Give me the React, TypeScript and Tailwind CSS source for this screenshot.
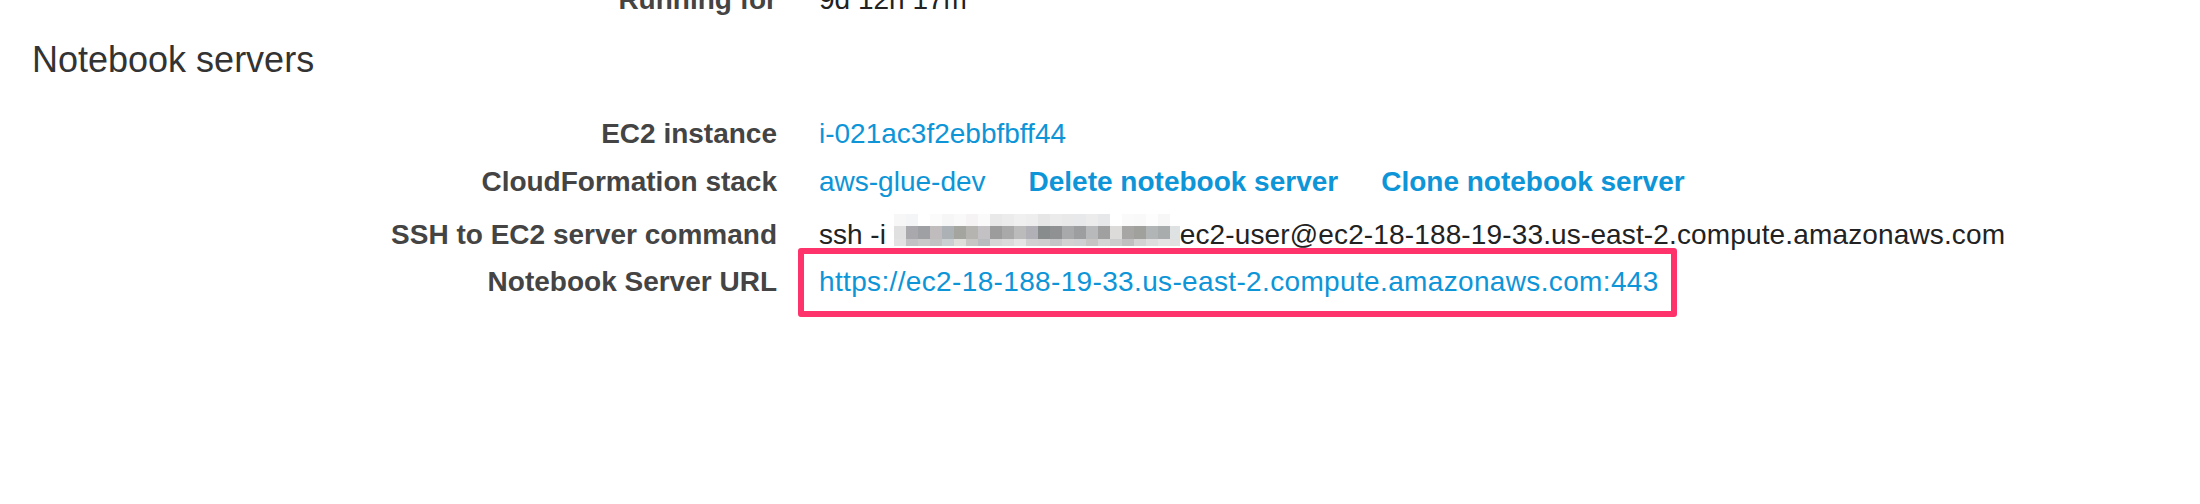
import React from "react";

const top = ['#f7f7f7','#f4f5f7','#ffffff','#fbfbfb','#f6f6f6','#f9f9f9','#f5f3f4','#fafafa','#e9e9e9','#ececec','#f0f0f0','#eeeeee','#e6e6e6','#ebebeb','#e9e9e9','#e8e9ea','#ececec','#e6e8ea','#ffffff','#fafafa','#f9f9f9','#fdfdfd','#f7f7f7','#ffffff'];
const mid = ['#e0e0e0','#a9a8ad','#9fa0a3','#c0bcbd','#acb1b5','#a4a59f','#b6b4b0','#c4c1c5','#9c9c9c','#a9a9a9','#bbbbbb','#b1b0b7','#888c8c','#8f9192','#a7a9aa','#9d9e9f','#b8b9ba','#a0a0a0','#dddbd9','#a8a6a4','#a0a09c','#b2b5b6','#a8acac','#dfe2e3'];
const bot = ['#e2e2e2','#c2c2c4','#c9c9c9','#c2c2c2','#cad0d2','#dedfda','#c8c6c4','#b8bcbe','#d5d5d5','#dadada','#e4e4e4','#d1d1d1','#cfcfcf','#c3c5c6','#d2d2d2','#cfd0d1','#c6c5c4','#d4d4d4','#cccccc','#c0c0c0','#d3d3d3','#dddddd','#e4e4e4','#e0e0e0'];

function Mosaic() {
  return (
    <div className="flex flex-col mt-[-5px] h-[32px] w-[286px] overflow-hidden shrink-0">
      {[{ c: top, h: "h-[12px]" }, { c: mid, h: "h-[13px]" }, { c: bot, h: "h-[7px]" }].map((r, i) => (
        <div key={i} className={`flex ${r.h}`}>
          {r.c.map((col, j) => (
            <div key={j} className="w-[12px] h-full shrink-0" style={{ backgroundColor: col }} />
          ))}
        </div>
      ))}
    </div>
  );
}

function Row({ label, h, children }: { label: string; h: string; children: React.ReactNode }) {
  return (
    <div className={`grid grid-cols-[745px_1fr] gap-x-[42px] ${h}`}>
      <div className="text-right font-bold text-[#444444]">{label}</div>
      <div className="flex items-start">{children}</div>
    </div>
  );
}

export default function App() {
  return (
    <div
      className="w-[2200px] h-[504px] bg-white overflow-hidden pl-[32px] text-[28px] leading-[32px] text-[#222222]"
      style={{ fontFamily: '"Liberation Sans", Arial, Helvetica, sans-serif' }}
    >
      <div className="mt-[-16px]">
        <Row label="Running for" h="h-[32px]">
          <span>9d 12h 17m</span>
        </Row>
      </div>
      <h2 className="mt-[24px] text-[36px] leading-[40px] font-normal text-[#333333]">Notebook servers</h2>
      <div className="mt-[38px]">
        <Row label="EC2 instance" h="h-[48px]">
          <span className="text-[#0d95d8]">i-021ac3f2ebbfbff44</span>
        </Row>
        <Row label="CloudFormation stack" h="h-[53px]">
          <div className="flex gap-x-[43px]">
            <span className="text-[#0d95d8]">aws-glue-dev</span>
            <span className="text-[#0d95d8] font-bold">Delete notebook server</span>
            <span className="text-[#0d95d8] font-bold">Clone notebook server</span>
          </div>
        </Row>
        <Row label="SSH to EC2 server command" h="h-[47px]">
          <span className="whitespace-pre">ssh -i </span>
          <Mosaic />
          <span className="tracking-[0.14px] whitespace-nowrap">ec2-user@ec2-18-188-19-33.us-east-2.compute.amazonaws.com</span>
        </Row>
        <Row label="Notebook Server URL" h="h-[32px]">
          <div className="relative">
            <span className="text-[#0d95d8] whitespace-nowrap tracking-[0.35px]">https://ec2-18-188-19-33.us-east-2.compute.amazonaws.com:443</span>
            <div className="absolute left-[-21px] top-[-18px] w-[879px] h-[69px] border-[6px] border-[#ff336b] rounded-[3px] pointer-events-none" />
          </div>
        </Row>
      </div>
    </div>
  );
}
